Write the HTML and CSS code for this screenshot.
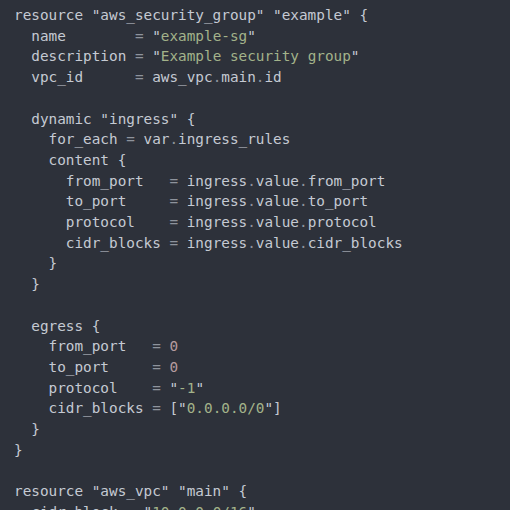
FILE: index.html
```html
<!DOCTYPE html>
<html>
<head>
<meta charset="utf-8">
<link rel="stylesheet" href="styles.css">
</head>
<body>
<pre class="code">resource "aws_security_group" "example" {
  name        <span class="p">=</span> "<span class="s">example-sg</span>"
  description <span class="p">=</span> "<span class="s">Example security group</span>"
  vpc_id      <span class="p">=</span> aws_vpc<span class="p">.</span>main<span class="p">.</span>id

  dynamic "ingress" {
    for_each <span class="p">=</span> var<span class="p">.</span>ingress_rules
    content {
      from_port   <span class="p">=</span> ingress<span class="p">.</span>value<span class="p">.</span>from_port
      to_port     <span class="p">=</span> ingress<span class="p">.</span>value<span class="p">.</span>to_port
      protocol    <span class="p">=</span> ingress<span class="p">.</span>value<span class="p">.</span>protocol
      cidr_blocks <span class="p">=</span> ingress<span class="p">.</span>value<span class="p">.</span>cidr_blocks
    }
  }

  egress {
    from_port   <span class="p">=</span> <span class="n">0</span>
    to_port     <span class="p">=</span> <span class="n">0</span>
    protocol    <span class="p">=</span> "<span class="s">-1</span>"
    cidr_blocks <span class="p">=</span> ["<span class="s">0.0.0.0/0</span>"]
  }
}

resource "aws_vpc" "main" {
  cidr_block <span class="p">=</span> "<span class="s">10.0.0.0/16</span>"
}</pre>
</body>
</html>
```
FILE: styles.css
```css
html, body {
  margin: 0;
  padding: 0;
  background: #2d313a;
  height: 100%;
  overflow: hidden;
}
.code {
  margin: 0;
  padding: 5px 14px;
  font-family: "DejaVu Sans Mono", "Liberation Mono", monospace;
  font-size: 14.35px;
  line-height: 20.7px;
  color: #c5cad3;
}
.p { color: #8e939c; }
.s { color: #a3b38a; }
.n { color: #b59b9f; }
```
